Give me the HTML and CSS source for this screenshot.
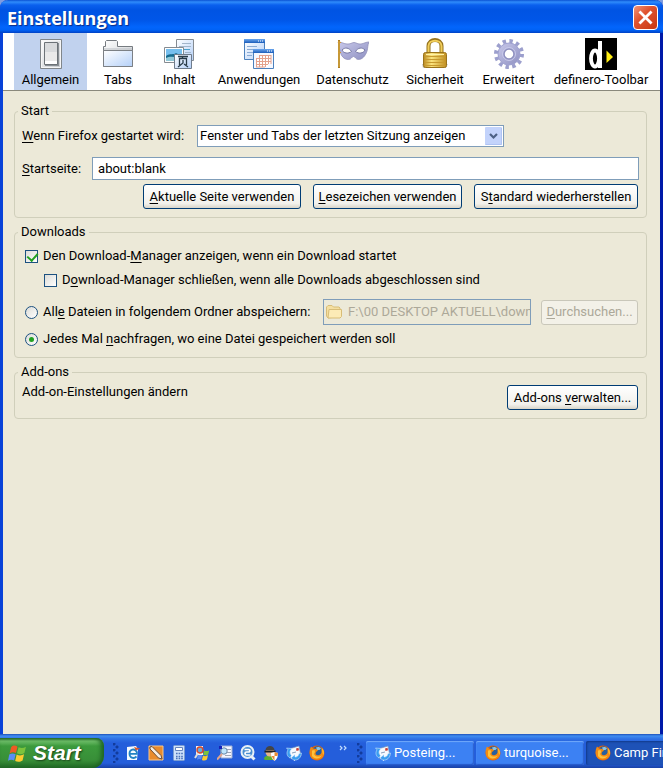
FILE: index.html
```html
<!DOCTYPE html>
<html lang="de">
<head>
<meta charset="utf-8">
<meta name="viewport" content="width=device-width, initial-scale=1">
<title>Einstellungen</title>
<link rel="stylesheet" href="styles.css">
</head>
<body>
<svg class="defs" aria-hidden="true">
  <defs>
    <linearGradient id="blue" x1="0" y1="0" x2="1" y2="1"><stop offset="0" stop-color="#fff"/><stop offset="1" stop-color="#b4d0f8"/></linearGradient>
    <linearGradient id="grey" x1="0" y1="0" x2="1" y2="1"><stop offset="0" stop-color="#fff"/><stop offset="1" stop-color="#c4c8cc"/></linearGradient>
    <linearGradient id="gold" x1="0" y1="0" x2="1" y2="0"><stop offset="0" stop-color="#b98a22"/><stop offset=".35" stop-color="#fbe47e"/><stop offset="1" stop-color="#c08e20"/></linearGradient>
    <linearGradient id="lilac" x1="0" y1="0" x2="1" y2="1"><stop offset="0" stop-color="#c9c9ea"/><stop offset="1" stop-color="#8e90c2"/></linearGradient>
    <linearGradient id="bar" x1="0" y1="0" x2="0" y2="1"><stop offset="0" stop-color="#6ba6ee"/><stop offset="1" stop-color="#1b5cba"/></linearGradient>
    <symbol id="firefox" viewBox="0 0 16 16">
      <circle cx="8" cy="8" r="7.5" fill="#e0600b"/>
      <circle cx="8.500" cy="6.500" r="5.200" fill="#285f9e"/>
      <path d="M7 2.500c2-1.200 4-.5 5 .8L10.500 5 8 5z" fill="#8ac4e4"/>
      <path d="M1 4 2 1.500 4 3.500 7.500 4 9 5.500 7 7 6.500 9c1.500 2 5 1.500 6-1.500L12.500 3.500C15 5 15.800 8 14.500 11 12 16 4 16 1.500 11.500.5 9 .4 6 1 4z" fill="#f28a13"/>
      <path d="M3 5.500 5.500 5 6 7 5 9C6.500 12.500 11 12 13 10 11 14.500 5 14.500 3 11z" fill="#ffc23c"/>
      <path d="M12.500 2.500C15 4.500 15.600 7.500 14.500 10L13.500 8z" fill="#ffb52a"/>
    </symbol>
    <symbol id="mail" viewBox="0 0 16 16">
      <path d="M3 4 13 1l2 10-10 3z" fill="#f6faff" stroke="#7894b8" stroke-width=".7"/>
      <path d="m10 3.500 2.500-.7.500 2.400-2.500.7z" fill="#c74038"/>
      <path d="m6 8 4-1" stroke="#8aa0bd"/>
      <path d="M.5 3 6 3.500 4.500 5.500C3.500 7.500 4 9 5.500 10.500L4 13C.5 11 .3 7.500 2 4.800z" fill="#3a9df0" stroke="#e4f4ff" stroke-width=".5"/>
      <path d="M8 15c4 .5 7-2 7.500-7L13 8.500C12.500 11 11 12 9 12V9.500L5 13l4 3z" fill="#3a9df0" stroke="#e4f4ff" stroke-width=".5"/>
    </symbol>
    <symbol id="flag" viewBox="0 0 18 17">
      <path d="M3 3C5 1 7 1.200 9 2.500L7.500 8.500C5.500 7.500 3.500 7.500 1.500 9z" fill="#ee5a24"/>
      <path d="M10 3c2.500 1.200 4.800 1 7-.5L15.500 8.500c-2.500 1.500-4.500 1.500-7 .3z" fill="#7cc33c"/>
      <path d="M1.200 10c2-1.500 4-1.300 6-.3L5.800 15.500C4 14.500 2 14.500 0 15.800z" fill="#5b8df4"/>
      <path d="M8.200 10c2.500 1.200 4.700 1 7-.3L13.800 15.500c-2.200 1.600-4.800 1.600-7 .5z" fill="#fccb30"/>
    </symbol>
  </defs>
</svg>

<main class="window">
  <header class="titlebar">
    <h1>Einstellungen</h1>
    <button class="close" type="button" aria-label="Schließen">
      <svg viewBox="0 0 25 25" aria-hidden="true"><path d="m7 7 11 11M18 7 7 18" stroke="#fff" stroke-width="3" stroke-linecap="square"/></svg>
    </button>
  </header>

  <nav class="toolbar" aria-label="Kategorien">
    <button class="tab selected" type="button">
      <svg viewBox="0 0 32 32" aria-hidden="true"><path d="M5.500 1.500h21v29h-21z" fill="url(#grey)" stroke="#80868b"/><path d="M6.500 2.500h19v27h-19z" fill="none" stroke="#f6f6f6"/><path d="M10 5h14v23H10z" fill="#888e93"/><path d="M9.500 4.500h13v22h-13z" fill="#f8f8f8" stroke="#6c7277"/><path d="M10 5h12v9H10z" fill="#d8dadc"/><path d="M10 14h12v9H10z" fill="#e9e9e9"/><path d="M10 23h12v3H10z" fill="#fff"/></svg>
      <span>Allgemein</span>
    </button>
    <button class="tab" type="button">
      <svg viewBox="0 0 32 32" aria-hidden="true"><path d="M1.500 28.500v-20h2v-5l1-1h10l1 1v5h15v20z" fill="url(#grey)" stroke="#767b80"/><path d="M2 11h28" stroke="#b9bdc2"/><path d="M1.500 12.500h29v16h-29z" fill="url(#blue)" stroke="#7c8085"/></svg>
      <span>Tabs</span>
    </button>
    <button class="tab" type="button">
      <svg viewBox="0 0 32 32" aria-hidden="true"><path d="M13.500 1.500h17v21h-17z" fill="url(#blue)" stroke="#858b91"/><path d="M19 5.500h9M16 8.500h12M22 14.500h6" stroke="#a1b5ca"/><path d="M16 11.500h11" stroke="#4aa3ce"/><path d="M1.500 9.500h19v15h-19z" fill="#fff" stroke="#858b91"/><path d="M3 11h16v12H3z" fill="#77bfee"/><path d="M3 18c4-3 8-1 10-3l6 3v5H3z" fill="#166b8e"/><path d="M3 20c5-3 10 0 16-1v4H3z" fill="#92c9d8"/><path d="M11.500 16.500h17v14h-17z" fill="url(#blue)" stroke="#6f7c8c"/><path d="M15 18.500h10M20 18.500l-1 2M16.500 27v-6.500h7V27M20 22v3l-5 4m6-3 4 3" fill="none" stroke="#293b48" stroke-width="1.300"/></svg>
      <span>Inhalt</span>
    </button>
    <button class="tab" type="button">
      <svg viewBox="0 0 32 32" aria-hidden="true"><path d="M1.500 1.500h20v20h-20z" fill="url(#blue)" stroke="#4c81bd"/><path d="M1 1h21v4H1z" fill="url(#bar)"/><path d="M15 3h1m1 0h1m1 0h1" stroke="#fff"/><path d="M4 8.500h10M4 11.500h14M4 14.500h7M4 17.500h5" stroke="#8aabd4"/><path d="M10.500 11.500h20v19h-20z" fill="#f6f8ff" stroke="#4c81bd"/><path d="M10 11h21v4H10z" fill="url(#bar)"/><path d="M24 13h1m1 0h1m1 0h1" stroke="#fff"/><path d="M16 17h12v9h-3v3H13v-9h3z" fill="#fff"/><path d="M16 17.500h12M13 20.500h15M13 23.500h15M13 26.500h12M13.500 20v9M16.500 17v12M19.500 17v12M22.500 17v12M25.500 17v9M28 17v9M13 29h9" stroke="#e4a28d" fill="none"/></svg>
      <span>Anwendungen</span>
    </button>
    <button class="tab" type="button">
      <svg viewBox="0 0 32 32" aria-hidden="true"><path d="M1 4c4 0 6 2 9 2 3 .5 5-1.500 7-1.500S21 6.500 24 6c3-.5 5-2 8-2-1.500 3-1 6-2 9-1.500 5-5 8.500-8.500 8.500-3 0-3-3-5-3s-2 3-5 3C7 21.500 4 18 3 13 2 9 3 7 1 4z" fill="url(#lilac)" stroke="#9090ba" stroke-width=".8"/><path d="M5 12c3-3 7-2.500 9.500 1.500-3 2.500-8 2-9.500-1.500zm13.500 1.500C21 9.500 25 9 28 12c-1.500 3.500-6.500 4-9.500 1.500z" fill="#fff" stroke="#7779a5"/><path d="M2 2v28" stroke="#ae7d20" stroke-width="2"/><path d="M2 3v26" stroke="#f2cd67" stroke-width=".7"/><path d="M1 4.500h3M1 14.500h3" stroke="#d49a2f"/></svg>
      <span>Datenschutz</span>
    </button>
    <button class="tab" type="button">
      <svg viewBox="0 0 32 32" aria-hidden="true"><path d="M3 26h26l-2 4H4z" fill="#c9c9c9"/><path d="M9.500 15V8c0-8 13-8 13 0v7" fill="none" stroke="#95721d" stroke-width="4"/><path d="M9.500 15V8c0-7 13-7 13 0v7" fill="none" stroke="#f1ce5b" stroke-width="2"/><rect x="4.500" y="14.500" width="23" height="15" rx="2" fill="url(#gold)" stroke="#9a731b"/><path d="M6 18.500h20M6 21.500h20M6 24.500h20M6 27.500h20" stroke="#c89a2f"/><path d="M7 16.500h18" stroke="#fff2a7"/></svg>
      <span>Sicherheit</span>
    </button>
    <button class="tab" type="button">
      <svg viewBox="0 0 32 32" aria-hidden="true"><circle cx="16" cy="16" r="13" fill="none" stroke="#9c9fcd" stroke-width="4" stroke-dasharray="3.400 3.407"/><circle cx="16" cy="16" r="11" fill="url(#lilac)" stroke="#9ea0d0"/><circle cx="16" cy="16" r="5" fill="#fff" stroke="#8f91c0" stroke-width="1.500"/><circle cx="16" cy="16" r="6.500" fill="none" stroke="#c8c9ea"/></svg>
      <span>Erweitert</span>
    </button>
    <button class="tab" type="button">
      <svg viewBox="0 0 32 32" aria-hidden="true"><path d="M0 0h32v32H0z" fill="#000"/><ellipse cx="10" cy="20.500" rx="4" ry="8" fill="none" stroke="#fff" stroke-width="3.800"/><path d="M15 3v27" stroke="#fff" stroke-width="4"/><path d="m21.500 12.500 6.500 6.500-6.500 6z" fill="#ffed12"/></svg>
      <span>definero-Toolbar</span>
    </button>
  </nav>

  <form class="panel">
    <fieldset>
      <legend>Start</legend>
      <div class="row start-mode">
        <label for="mode"><u>W</u>enn Firefox gestartet wird:</label>
        <div class="select">
          <select id="mode"><option>Fenster und Tabs der letzten Sitzung anzeigen</option></select>
          <svg viewBox="0 0 17 18" aria-hidden="true"><rect width="17" height="18" rx="1" fill="#c3d3fb"/><path d="M.5 17.500h16V1" fill="none" stroke="#afc3f3"/><path d="m5 7 3.500 3.500L12 7" fill="none" stroke="#4d6185" stroke-width="2.200"/></svg>
        </div>
      </div>
      <div class="row homepage">
        <label for="home"><u>S</u>tartseite:</label>
        <input class="text" id="home" type="text" value="about:blank">
      </div>
      <div class="row actions">
        <button class="button current" type="button"><u>A</u>ktuelle Seite verwenden</button>
        <button class="button bookmark" type="button"><u>L</u>esezeichen verwenden</button>
        <button class="button restore" type="button">S<u>t</u>andard wiederherstellen</button>
      </div>
    </fieldset>

    <fieldset>
      <legend>Downloads</legend>
      <label class="row choice"><input type="checkbox" checked><span>Den Download-<u>M</u>anager anzeigen, wenn ein Download startet</span></label>
      <label class="row choice nested"><input type="checkbox"><span>D<u>o</u>wnload-Manager schließen, wenn alle Downloads abgeschlossen sind</span></label>
      <div class="row folder">
        <label class="choice"><input type="radio" name="target"><span>All<u>e</u> Dateien in folgendem Ordner abspeichern:</span></label>
        <div class="path">
          <svg viewBox="0 0 16 14" aria-hidden="true"><path d="M.5 11V2L2 .5h4L7.500 2H13l1 1v8.500L2 13z" fill="#f5dfa0" stroke="#d8bd77"/><path d="M3 4.500h12.500v7L14 13H2z" fill="#fcebb6" stroke="#d8bd77"/></svg>
          <input type="text" aria-label="Ordner" value="F:\00 DESKTOP AKTUELL\down" disabled>
        </div>
        <button class="button browse" type="button" disabled><u>D</u>urchsuchen...</button>
      </div>
      <label class="row choice ask"><input type="radio" name="target" checked><span>Jedes Mal <u>n</u>achfragen, wo eine Datei gespeichert werden soll</span></label>
    </fieldset>

    <fieldset>
      <legend>Add-ons</legend>
      <div class="row addons">
        <span>Add-on-Einstellungen ändern</span>
        <button class="button manage" type="button">Add-ons <u>v</u>erwalten...</button>
      </div>
    </fieldset>
  </form>
</main>

<footer class="taskbar">
  <button class="start" type="button"><svg viewBox="0 0 18 17" aria-hidden="true"><use href="#flag"/></svg>Start</button>
  <i class="grip"></i>
  <div class="quick">
    <a href="#" aria-label="Browser"><svg viewBox="0 0 16 16" aria-hidden="true"><path d="M2 2 11 1l2 3-1 11H2z" fill="#f4faff"/><path d="M11.500 11.500c-3 3-7 1-7-3s5-5.500 7-2c.5 1 .5 1.500.4 2.300H5" fill="none" stroke="#2383c4" stroke-width="1.800"/><path d="M9 2 15 3.500 11 5.500z" fill="#d9582c"/></svg></a>
    <a href="#" aria-label="Zeichnen"><svg viewBox="0 0 16 16" aria-hidden="true"><path d="M1 1h14v14H1z" fill="#e98b2c" stroke="#f9c689"/><path d="m2 2 2-.5 9 9 1 3.500-3.500-1L2 4z" fill="#f6ecdf" stroke="#6b4c37"/></svg></a>
    <a href="#" aria-label="Rechner"><svg viewBox="0 0 16 16" aria-hidden="true"><rect x="2.500" y=".5" width="11" height="15" rx="1" fill="#cee1fb" stroke="#7c9dd0"/><path d="M4.500 2.500h7v3h-7z" fill="#fff" stroke="#6685bd"/><path d="M5 8.500h7M5 11.500h7M5 13.500h7" stroke="#4c73b8" stroke-width="1.500" stroke-dasharray="1.600 1"/></svg></a>
    <a href="#" aria-label="Windows"><svg viewBox="0 0 16 16" aria-hidden="true"><use href="#flag" x="3" y="3" width="13" height="13"/><path d="M2 1h7v9H2z" fill="#f7f7f7"/><circle cx="6" cy="5" r="3" fill="#69acd9" stroke="#d64b2e" stroke-width="1.500"/><path d="m4 8-3 5" stroke="#ddd" stroke-width="2"/></svg></a>
    <a href="#" aria-label="Suche"><svg viewBox="0 0 16 16" aria-hidden="true"><path d="M4 1h11v12H4z" fill="#f4f6ff" stroke="#9eafd2"/><path d="M10 4.500h4M10 7.500h4M8 10.500h6" stroke="#9da6b8"/><circle cx="7" cy="6" r="3.200" fill="#bde4fc" stroke="#6b89a7"/><path d="m5 9-5 5.500" stroke="#e2a48b" stroke-width="2"/><path d="M2 1h3v3H2z" fill="#1523b8"/></svg></a>
    <a href="#" aria-label="Lupe"><svg viewBox="0 0 16 16" aria-hidden="true"><circle cx="7.500" cy="7" r="6" fill="#4b8fd0" stroke="#e8f0f5" stroke-width="2"/><path d="m11.500 11.500 3 3" stroke="#e8f0f5" stroke-width="3"/><path d="M4.500 4.500h4c2 0 2 2.500 0 2.500h-2c-2 0-2 3 0 3h4" fill="none" stroke="#fff" stroke-width="1.700"/></svg></a>
    <a href="#" aria-label="Schutz"><svg viewBox="0 0 16 16" aria-hidden="true"><path d="M1 14c0-5 12-5 12 0l-1 1H2z" fill="#5dae32"/><circle cx="7" cy="7" r="4.500" fill="#e7b58c"/><path d="M2.500 5C3-.5 11-.5 11.500 5z" fill="#444"/><path d="M1.500 5.500h11v2h-11z" fill="#222"/><path d="m8 8 3.500-1L15 8c0 4-1 6-3.500 8C9 14 8 12 8 8z" fill="#fff"/><path d="M11.500 7 15 8l-.5 3h-3zM8.500 11h3v5z" fill="#e88b35"/></svg></a>
    <a href="#" aria-label="Post"><svg viewBox="0 0 16 16" aria-hidden="true"><use href="#mail"/></svg></a>
    <a href="#" aria-label="Firefox"><svg viewBox="0 0 16 16" aria-hidden="true"><use href="#firefox"/></svg></a>
  </div>
  <button class="more" type="button" aria-label="Mehr"><svg viewBox="0 0 8 6" aria-hidden="true"><path d="m1 1 2 2-2 2m4-4 2 2-2 2" fill="none" stroke="#c2dcff" stroke-width="1.200"/></svg></button>
  <i class="grip"></i>
  <div class="tasks">
    <button class="task" type="button"><svg viewBox="0 0 16 16" aria-hidden="true"><use href="#mail"/></svg>Posteing...</button>
    <button class="task" type="button"><svg viewBox="0 0 16 16" aria-hidden="true"><use href="#firefox"/></svg>turquoise...</button>
    <button class="task active" type="button"><svg viewBox="0 0 16 16" aria-hidden="true"><use href="#firefox"/></svg>Camp Fir</button>
  </div>
</footer>
</body>
</html>
```
FILE: styles.css
```css
* { box-sizing: border-box; }

body {
  margin: 0;
  min-height: 100vh;
  display: flex;
  flex-direction: column;
  overflow-x: hidden;
  background: #7f9ce0;
  color: #000;
  font: 13px/16px Roboto, "Noto Sans", sans-serif;
}

button, input, select { font: inherit; color: inherit; margin: 0; }
svg { display: block; flex: none; }
u { text-decoration-thickness: 1px; text-underline-offset: 2px; }
.defs { position: absolute; width: 0; height: 0; }

.window {
  flex: 1;
  display: flex;
  flex-direction: column;
  background: #ece9d8;
  border: solid #0842d8;
  border-width: 0 3px;
  border-right-color: #0019a8;
  border-radius: 8px 8px 0 0;
}

.titlebar {
  display: flex;
  align-items: center;
  justify-content: space-between;
  height: 33px;
  margin: 0 -3px;
  padding: 2px 5px 0 7px;
  border-radius: 8px 8px 0 0;
  background: linear-gradient(#0a52d4 0, #2f8cfb 2px, #0a60ee 5px, #0054e3 10px, #0056e8 20px, #0265fc 27px, #0062f6 30px, #0041c4 33px);
}

h1 {
  margin: 0;
  color: #fff;
  font: bold 18px/24px "Open Sans", "Noto Sans", sans-serif;
  text-shadow: 1px 1px 1px #0b2c86;
}

.close {
  width: 25px;
  height: 25px;
  padding: 0;
  border: 1px solid #fff;
  border-radius: 4px;
  background: linear-gradient(135deg, #ee9478, #e0532f 40%, #c63711);
}
.close svg { width: 23px; height: 23px; }

.toolbar {
  display: grid;
  grid-template-columns: 73fr 62fr 60fr 100fr 87fr 78fr 69fr 116fr;
  height: 58px;
  padding: 0 1px 0 11px;
  background: #fff;
  border-bottom: 1px solid #8a897c;
}

.tab {
  display: flex;
  flex-direction: column;
  align-items: center;
  gap: 2px;
  padding: 5px 0 0;
  border: 0;
  background: none;
  white-space: nowrap;
}
.tab svg { width: 32px; height: 32px; }
.selected { background: #c1d2ee; }

.panel { padding: 12px 13px 12px 11px; }

fieldset {
  min-width: 0;
  margin: 0 0 6px;
  padding: 4px 7px 8px;
  border: 1px solid #d0cfbb;
  border-radius: 4px;
}
legend { padding: 0 3px; margin-left: -4px; }

.row { display: flex; align-items: center; }

.start-mode { gap: 13px; margin-top: 2px; }
.select { position: relative; flex: 0 1 307px; }
select {
  width: 100%;
  height: 22px;
  padding: 0 20px 0 2px;
  border: 1px solid #7f9db9;
  border-radius: 0;
  background: #fff;
  appearance: none;
}
.select svg {
  position: absolute;
  top: 2px;
  right: 2px;
  width: 17px;
  height: 18px;
  pointer-events: none;
}

.homepage { gap: 11px; margin-top: 10px; }
.text {
  flex: 1;
  min-width: 0;
  height: 23px;
  padding: 0 5px;
  border: 1px solid #7f9db9;
  background: #fff;
}

.actions { justify-content: flex-end; gap: 12px; margin-top: 4px; padding-right: 1px; }

.button {
  height: 25px;
  padding: 0;
  border: 1px solid #003c74;
  border-radius: 3px;
  background: linear-gradient(#fff, #f2f1ec 80%, #d9d5c9);
  white-space: nowrap;
}
.button:disabled { border-color: #c9c7ba; background: #f3f1e8; color: #aca899; }
.current { width: 158px; }
.bookmark { width: 149px; }
.restore { width: 164px; }
.browse { width: 97px; }
.manage { width: 131px; margin-top: 1px; }

.choice { display: flex; align-items: center; gap: 5px; height: 24px; padding-left: 3px; }
.nested { padding-left: 22px; }
.ask { height: 20px; }

input[type="checkbox"], input[type="radio"] {
  position: relative;
  flex: none;
  width: 13px;
  height: 13px;
  border: 1px solid #1c5180;
  background: linear-gradient(135deg, #dcdcd7, #fff);
  appearance: none;
}
input[type="radio"] { border-radius: 50%; }
input[type="checkbox"]:checked::after {
  content: "";
  position: absolute;
  left: 3px;
  top: 0;
  width: 5px;
  height: 8px;
  border: solid #21a121;
  border-width: 0 2px 2px 0;
  transform: rotate(42deg);
}
input[type="radio"]:checked::after {
  content: "";
  position: absolute;
  inset: 3px;
  border-radius: 50%;
  background: #21a121;
}

.folder { margin: 7px 0 4px; padding-right: 1px; }
.path {
  display: flex;
  align-items: center;
  flex: 0 1 208px;
  min-width: 0;
  height: 26px;
  margin: 0 10px 0 auto;
  padding: 0 0 0 2px;
  gap: 6px;
  border: 1px solid #7f9db9;
}
.path svg { width: 16px; height: 14px; }
.path input {
  flex: 1;
  min-width: 0;
  padding: 0;
  border: 0;
  background: none;
  color: #aca899;
}

.addons { justify-content: space-between; align-items: flex-start; padding-right: 1px; }

.taskbar {
  display: flex;
  align-items: stretch;
  height: 34px;
  overflow: hidden;
  background: linear-gradient(#1e50b8 0, #3f8cf0 2px, #2f70e4 5px, #245edb 9px, #245edb 29px, #1941a5 34px);
  color: #fff;
}

.start {
  display: flex;
  align-items: center;
  flex: none;
  gap: 6px;
  width: 104px;
  margin-top: 4px;
  padding: 0 0 0 8px;
  border: 0;
  border-radius: 0 8px 12px 0;
  background: linear-gradient(#296b29 0, #6fbf6a 3px, #3c9a3c 8px, #388f38 22px, #226a26 30px);
  box-shadow: inset -3px 0 4px #1f6423;
  font: italic bold 21px/24px "Liberation Sans", sans-serif;
  text-shadow: 1px 1px 2px #173f17;
}
.start svg { width: 19px; height: 18px; }

.grip {
  flex: none;
  align-self: center;
  width: 6px;
  height: 20px;
  margin: 4px 0 0 9px;
  background:
    radial-gradient(circle at 1px 1px, #123b9c 1px, transparent 2px) 0 0 / 6px 6px,
    radial-gradient(circle at 4px 4px, #123b9c 1px, transparent 2px) 0 0 / 6px 6px;
}

.quick { display: flex; align-items: center; gap: 7px; margin: 4px 0 0 6px; }
.quick svg { width: 16px; height: 16px; }

.more { flex: none; width: 9px; padding: 0; margin-left: 14px; border: 0; background: none; }
.more svg { width: 8px; height: 6px; margin-bottom: 6px; }

.tasks { display: flex; flex: 1 0 0; min-width: 0; gap: 2px; margin: 7px 0 3px 3px; }
.task {
  display: flex;
  align-items: center;
  flex: none;
  gap: 3px;
  width: 108px;
  padding: 0 0 0 9px;
  border: 0;
  border-radius: 2px;
  background: #3c81f3;
  box-shadow: inset 0 1px 1px #72a9fa, inset -1px -1px 1px #2558c8;
  white-space: nowrap;
}
.task svg { width: 16px; height: 16px; }
.active { background: #1e52b7; box-shadow: inset 1px 1px 2px #12398a; }
```
